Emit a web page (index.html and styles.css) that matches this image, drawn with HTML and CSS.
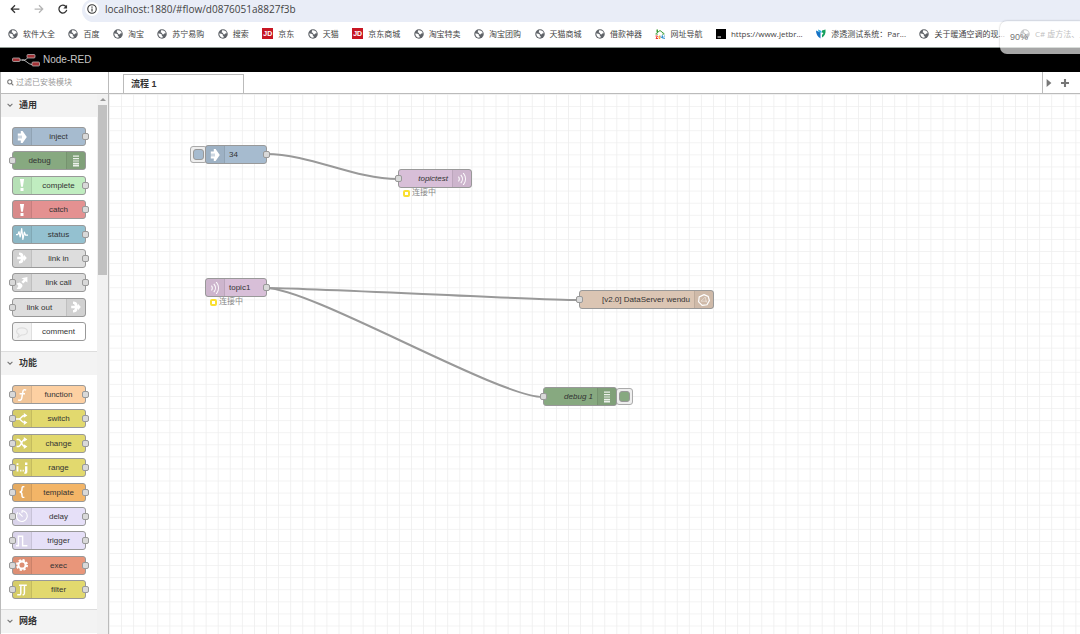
FILE: index.html
```
<!DOCTYPE html>
<html lang="zh-CN">
<head>
<meta charset="utf-8">
<title>Node-RED</title>
<link rel="stylesheet" href="styles.css">
</head>
<body>
<svg class="sprite" aria-hidden="true">
  <symbol id="i-globe" viewBox="0 0 20 20"><circle cx="10" cy="10" r="9.500" fill="#5f6368"/><path d="M2.500 9c2-.5 4 0 6 1s0 3 2 4 1 2 0 3.500c-5 0-8-4-8-8.500zM8 3c2-1 4-.5 6 .5s3 3 3.500 5l-3 .5-1.500 2-3-1 .5-2-3-1z" fill="#fff"/></symbol>
  <symbol id="i-inject" viewBox="0 0 20 20"><path fill="#fff" d="M3 4h5V0h3l7 10-7 10H8v-4H3v-4h7v-1H3V9h7V8H3z"/></symbol>
  <symbol id="i-debug" viewBox="0 0 20 20"><path fill="#fff" fill-opacity=".85" d="M5 1h10v2H5zM5 5h10v2H5zM5 9h10v2H5zM5 13h10v2H5zM5 16h10v3H5z"/></symbol>
  <symbol id="i-alert" viewBox="0 0 20 20"><path fill="#fff" d="M6.500 0h7l-2 13h-3zM7.500 15h5v5h-5z"/></symbol>
  <symbol id="i-status" viewBox="0 0 20 20"><path fill="none" stroke="#fff" stroke-width="2" stroke-linejoin="round" d="M0 11h3l2-5 2 9 2.500-14 2 18 2.500-12 2 5h4"/></symbol>
  <symbol id="i-link" viewBox="0 0 20 20"><path fill="#fff" d="M5 1c5 0 7 2 7 5V7h1V4l5 6-5 6v-3h-1v1c0 3-2 5-7 5v-4c2 0 3-1 3-3H2V8h6c0-2-1-3-3-3z"/></symbol>
  <symbol id="i-call" viewBox="0 0 20 20"><path fill="#fff" d="M9 2l10-2v9l-3-2-4 4-3-3 4-4zM1 11l5-2 4 3c2 3 0 5-3 8H1l3-5z"/></symbol>
  <symbol id="i-comment" viewBox="0 0 20 20"><path fill="none" stroke="#ddd" stroke-width="2" d="M10 3c5 0 9 2.500 9 6s-4 6-9 6H9l-6 4 2-5c-2-1-4-3-4-5 0-3.500 4-6 9-6z"/></symbol>
  <symbol id="i-function" viewBox="0 0 20 20"><path fill="none" stroke="#fff" stroke-width="2.500" d="M17 2c-3-1.500-5-.5-5.500 2.500l-2 11c-.5 3-3 4-6 2.500M6 8h9"/></symbol>
  <symbol id="i-switch" viewBox="0 0 20 20"><path fill="none" stroke="#fff" stroke-width="2.500" d="M0 10h5c4 0 3-6 10-6M5 10c4 0 3 6 10 6"/><path fill="#fff" d="M13 0l6 4-6 4zM13 12l6 4-6 4z"/></symbol>
  <symbol id="i-change" viewBox="0 0 20 20"><path fill="none" stroke="#fff" stroke-width="2.500" d="M1 4h3c5 0 5 12 11 12M1 16h3c5 0 5-12 11-12"/><path fill="#fff" d="M13 0l6 4-6 4zM13 12l6 4-6 4z"/></symbol>
  <symbol id="i-range" viewBox="0 0 20 20"><path fill="#fff" d="M1 2h3v3H1zM1 7h3v9H1zM7 13h2v3H7zM11 13h2v3h-2zM15 1h4v4h-4zM15 7h4v9c0 3-2 4-5 4v-3l1-1z"/></symbol>
  <symbol id="i-template" viewBox="0 0 20 20"><path fill="none" stroke="#fff" stroke-width="2.500" d="M14 1c-4 0-4 1-4 4s0 5-4 5c4 0 4 2 4 5s0 4 4 4"/></symbol>
  <symbol id="i-delay" viewBox="0 0 20 20"><path fill="none" stroke="#fff" stroke-width="1.800" d="M10 1a9 9 0 1 1-7 3M10 1v4M5 5l6 6"/></symbol>
  <symbol id="i-trigger" viewBox="0 0 20 20"><path fill="none" stroke="#fff" stroke-width="2.400" d="M0 18h4V2h7v16h8"/></symbol>
  <symbol id="i-exec" viewBox="0 0 20 20"><circle cx="10" cy="10" r="6" fill="none" stroke="#fff" stroke-width="3.500"/><circle cx="10" cy="10" r="8.500" fill="none" stroke="#fff" stroke-width="3" stroke-dasharray="3.700 2.970"/></symbol>
  <symbol id="i-filter" viewBox="0 0 20 20"><path fill="none" stroke="#fff" stroke-width="2.500" d="M2 18h4c2 0 2-1 2-4V6c0-3 0-4 3-4h7M11 18c3 0 3-1 3-4V6c0-3 0-4 2-4M5 2h6"/></symbol>
  <symbol id="i-waves" viewBox="0 0 20 20"><path fill="none" stroke="#fff" stroke-width="1.800" d="M4 6c2 2 2 6 0 8M8 3c3.500 4 3.500 10 0 14M12 0c5 6 5 14 0 20"/></symbol>
  <symbol id="i-data" viewBox="0 0 20 20"><path fill="none" stroke="#fff" stroke-width="2" d="M10 1l7 3 2 7-4 7-8 1-6-6 1-8z"/><path fill="none" stroke="#fff" stroke-opacity=".6" stroke-width="1.200" d="M5 12l7-7 2 9M5 12h10"/></symbol>
  <symbol id="i-chevron" viewBox="0 0 10 10"><path fill="none" stroke="#777" stroke-width="1.800" d="M1 3l4 4 4-4"/></symbol>
</svg>

<header class="browser">
  <button class="tool" aria-label="后退"><svg viewBox="0 0 16 16"><path d="M15 8H2M8 2L2 8l6 6" fill="none" stroke="#333" stroke-width="2"/></svg></button>
  <button class="tool" aria-label="前进"><svg viewBox="0 0 16 16"><path d="M1 8h13M8 2l6 6-6 6" fill="none" stroke="#b5b5b5" stroke-width="2"/></svg></button>
  <button class="tool" aria-label="刷新"><svg viewBox="0 0 16 16"><path d="M13 4.500A6.300 6.300 0 1 0 14 9.500" fill="none" stroke="#333" stroke-width="2"/><path d="M14.500 1v6h-6z" fill="#333"/></svg></button>
  <div class="address">
    <span class="info"><svg viewBox="0 0 16 16"><circle cx="8" cy="8" r="6.800" fill="none" stroke="#333" stroke-width="1.700"/><path d="M8 7v5M8 4v1.800" stroke="#333" stroke-width="1.800"/></svg></span>
    <input class="url" aria-label="网址" value="localhost:1880/#flow/d0876051a8827f3b">
  </div>
</header>

<nav class="bookmarks">
  <div class="marks">
    <a class="mark" href="#"><svg><use href="#i-globe"/></svg>软件大全</a>
    <a class="mark" href="#"><svg><use href="#i-globe"/></svg>百度</a>
    <a class="mark" href="#"><svg><use href="#i-globe"/></svg>淘宝</a>
    <a class="mark" href="#"><svg><use href="#i-globe"/></svg>苏宁易购</a>
    <a class="mark" href="#"><svg><use href="#i-globe"/></svg>搜索</a>
    <a class="mark" href="#"><span class="jd">JD</span>京东</a>
    <a class="mark" href="#"><svg><use href="#i-globe"/></svg>天猫</a>
    <a class="mark" href="#"><span class="jd">JD</span>京东商城</a>
    <a class="mark" href="#"><svg><use href="#i-globe"/></svg>淘宝特卖</a>
    <a class="mark" href="#"><svg><use href="#i-globe"/></svg>淘宝团购</a>
    <a class="mark" href="#"><svg><use href="#i-globe"/></svg>天猫商城</a>
    <a class="mark" href="#"><svg><use href="#i-globe"/></svg>借款神器</a>
    <a class="mark" href="#"><svg viewBox="0 0 20 20"><path d="M1 10l9-7 9 7M4 9v3M16 9v3" fill="none" stroke="#3a9b35" stroke-width="2"/><path d="M3 1h3v5H3z" fill="#3a9b35"/><path d="M1 14h4l-3 5h4" fill="none" stroke="#e33" stroke-width="2"/><path d="M8 14h2v5H8z" fill="none" stroke="#f80" stroke-width="1.500"/><path d="M12 13v4h3v-4 6M19 13l-2 6h3" fill="none" stroke="#28c" stroke-width="1.500"/></svg>网址导航</a>
    <a class="mark" href="#"><svg viewBox="0 0 20 20"><path d="M0 0h20v20H0z"/><path d="M3 15h7v2H3z" fill="#fff"/></svg>https://www.jetbr...</a>
    <a class="mark" href="#"><svg viewBox="0 0 20 20"><path d="M0 3l9 4v12c-6-3-9-9-9-16z" fill="#1673c5"/><path d="M4 1l7 3v4L5 5z" fill="#29abe2"/><path d="M12 3l7-2c1 8-2 13-7 16v-5l3-4-3-1z" fill="#14a05c"/></svg>渗透测试系统：Par...</a>
    <a class="mark" href="#"><svg><use href="#i-globe"/></svg>关于暖通空调的现...</a>
  </div>
  <a class="mark tail" href="#"><svg><use href="#i-globe"/></svg>C# 虚方法、上</a>
  <div class="zoom">90%</div>
</nav>

<header class="brand">
  <svg class="logo" viewBox="0 0 56 26"><path d="M16 12h6c10 0 8-8 18-8M20 12c10 0 10 9 22 9" fill="none" stroke="#bbb" stroke-width="2"/><g fill="#a33236" stroke="#bbb" stroke-width="1.500"><rect x="1" y="8" width="15" height="7" rx="2"/><rect x="30" y="1" width="16" height="7" rx="2"/><rect x="40" y="16" width="15" height="8" rx="2"/></g></svg>
  <span>Node-RED</span>
</header>

<main class="editor">
  <aside class="palette">
    <label class="search"><svg viewBox="0 0 10 10"><circle cx="4" cy="4" r="3" fill="none" stroke="#777" stroke-width="1.500"/><path d="M6 6l3 3" stroke="#777" stroke-width="1.600"/></svg><input placeholder="过滤已安装模块" aria-label="过滤已安装模块"></label>
    <div class="scroller">
      <div class="categories">
        <section>
          <button class="category"><svg><use href="#i-chevron"/></svg>通用</button>
          <div class="nodes">
            <div class="node out blue"><span class="icon"><svg><use href="#i-inject"/></svg></span><span class="label">inject</span></div>
            <div class="node in green flip"><span class="icon"><svg><use href="#i-debug"/></svg></span><span class="label">debug</span></div>
            <div class="node out mint"><span class="icon"><svg><use href="#i-alert"/></svg></span><span class="label">complete</span></div>
            <div class="node out red"><span class="icon"><svg><use href="#i-alert"/></svg></span><span class="label">catch</span></div>
            <div class="node out teal"><span class="icon"><svg><use href="#i-status"/></svg></span><span class="label">status</span></div>
            <div class="node out grey"><span class="icon"><svg><use href="#i-link"/></svg></span><span class="label">link in</span></div>
            <div class="node in out grey"><span class="icon"><svg><use href="#i-call"/></svg></span><span class="label">link call</span></div>
            <div class="node in grey flip"><span class="icon"><svg><use href="#i-link"/></svg></span><span class="label">link out</span></div>
            <div class="node white"><span class="icon"><svg><use href="#i-comment"/></svg></span><span class="label">comment</span></div>
          </div>
        </section>
        <section>
          <button class="category"><svg><use href="#i-chevron"/></svg>功能</button>
          <div class="nodes">
            <div class="node in out peach"><span class="icon"><svg><use href="#i-function"/></svg></span><span class="label">function</span></div>
            <div class="node in out yellow"><span class="icon"><svg><use href="#i-switch"/></svg></span><span class="label">switch</span></div>
            <div class="node in out yellow"><span class="icon"><svg><use href="#i-change"/></svg></span><span class="label">change</span></div>
            <div class="node in out yellow"><span class="icon"><svg><use href="#i-range"/></svg></span><span class="label">range</span></div>
            <div class="node in out orange"><span class="icon"><svg><use href="#i-template"/></svg></span><span class="label">template</span></div>
            <div class="node in out lilac"><span class="icon"><svg><use href="#i-delay"/></svg></span><span class="label">delay</span></div>
            <div class="node in out lilac"><span class="icon"><svg><use href="#i-trigger"/></svg></span><span class="label">trigger</span></div>
            <div class="node in out salmon"><span class="icon"><svg><use href="#i-exec"/></svg></span><span class="label">exec</span></div>
            <div class="node in out yellow"><span class="icon"><svg><use href="#i-filter"/></svg></span><span class="label">filter</span></div>
          </div>
        </section>
        <section>
          <button class="category"><svg><use href="#i-chevron"/></svg>网络</button>
        </section>
      </div>
      <div class="scrollbar"><span class="arrow"></span><span class="thumb"></span></div>
    </div>
  </aside>

  <div class="workspace">
    <div class="tabs">
      <button class="tab">流程 1</button>
      <div class="tab-tools">
        <button aria-label="向右滚动"><svg viewBox="0 0 10 10"><path d="M2 0l6 5-6 5z" fill="#777"/></svg></button>
        <button aria-label="添加流程"><svg viewBox="0 0 10 10"><path d="M5 0v10M0 5h10" stroke="#777" stroke-width="2.600"/></svg></button>
      </div>
    </div>
    <div class="canvas">
      <svg class="wires" aria-hidden="true">
        <defs><pattern id="grid" width="20" height="20" patternUnits="userSpaceOnUse" patternTransform="scale(.604)"><path d="M0 .5h20M.5 0v20" stroke="#eee" stroke-width="1.600"/></pattern></defs>
        <rect width="100%" height="100%" fill="url(#grid)"/>
        <g fill="none" stroke="#999" stroke-width="2">
          <path d="M157 60C202 60 244 85 289 85"/>
          <path d="M157 194C202 194 425 206 470 206"/>
          <path d="M157 194C202 194 389 303 434 303"/>
        </g>
      </svg>
      <button class="trigger t-inject" aria-label="注入"><span></span></button>
      <div class="node out blue placed n-inject"><span class="icon"><svg><use href="#i-inject"/></svg></span><span class="label">34</span></div>
      <div class="node in pink flip placed n-test"><span class="icon"><svg><use href="#i-waves"/></svg></span><span class="label"><em>topictest</em></span></div>
      <div class="state s-test">连接中</div>
      <div class="node out pink placed n-topic"><span class="icon"><svg><use href="#i-waves"/></svg></span><span class="label">topic1</span></div>
      <div class="state s-topic">连接中</div>
      <div class="node in tan flip placed n-data"><span class="icon"><svg><use href="#i-data"/></svg></span><span class="label">[v2.0] DataServer wendu</span></div>
      <button class="trigger t-debug" aria-label="调试开关"><span></span></button>
      <div class="node in green flip placed n-debug"><span class="icon"><svg><use href="#i-debug"/></svg></span><span class="label"><em>debug 1</em></span></div>
    </div>
  </div>
</main>
</body>
</html>
```
FILE: styles.css
```
*, *::before, *::after { box-sizing: border-box; }
body {
  margin: 0;
  height: 100vh;
  display: flex;
  flex-direction: column;
  overflow: hidden;
  background: #fff;
  color: #333;
  font: 8px/12px "Liberation Sans", "Noto Sans CJK SC", sans-serif;
}
button, input { font: inherit; color: inherit; border: 0; padding: 0; background: none; outline: 0; }
a { color: inherit; text-decoration: none; }
.sprite { position: absolute; width: 0; height: 0; }

/* Browser chrome */
.browser { display: flex; align-items: center; height: 20px; flex: none; padding: 0 0 3px 10px; gap: 14px; }
.tool { display: flex; width: 10px; height: 10px; }
.tool svg { width: 10px; height: 10px; }
.address { flex: 1; display: flex; align-items: center; gap: 6px; height: 23px; margin-bottom: -3px; padding: 0 0 3px 3px; background: #e9edf7; border-radius: 12px 0 0 12px; }
.info { display: flex; align-items: center; justify-content: center; width: 14px; height: 14px; background: #fff; border-radius: 50%; }
.info svg { width: 10px; height: 10px; }
.url { flex: 1; font: 10px/14px "Open Sans", sans-serif; color: #444; }
.bookmarks { position: relative; display: flex; align-items: center; gap: 15px; flex: none; height: 28px; padding-left: 8px; border-bottom: 1px solid #8f9a93; font-family: "Open Sans", "Noto Sans CJK SC", sans-serif; white-space: nowrap; }
.marks { flex: 1; display: flex; justify-content: space-between; }
.mark { display: flex; align-items: center; gap: 5px; color: #444; }
.mark svg { width: 10px; height: 10px; flex: none; }
.jd { width: 11px; height: 11px; background: #c81623; color: #fff; font: bold 7px/11px "Liberation Sans", sans-serif; text-align: center; }
.tail { flex: none; width: 60px; overflow: hidden; }
.zoom { position: absolute; right: -6px; top: 1px; width: 86px; height: 33px; padding: 9px 10px; z-index: 1; border-radius: 7px; background: rgba(255, 255, 255, .65); box-shadow: 0 0 2px rgba(0, 0, 0, .3); color: #777; font: 9px/14px "Liberation Sans", sans-serif; }

/* Editor header */
.brand { display: flex; align-items: center; gap: 3px; flex: none; height: 24px; padding-left: 12px; background: #000; color: #c7c7c7; font-size: 10px; }
.logo { width: 28px; height: 13px; }

.editor { flex: 1; display: flex; min-height: 0; }

/* Palette */
.palette { width: 109px; flex: none; display: flex; flex-direction: column; border: solid #bbb; border-width: 0 1px; }
.search { display: flex; align-items: center; gap: 2px; flex: none; height: 22px; padding-left: 6px; border-bottom: 1px solid #bbb; }
.search svg { width: 7px; height: 7px; }
.search input { width: 80px; }
.search input::placeholder { color: #999; }
.scroller { flex: 1; display: flex; min-height: 0; }
.categories { flex: 1; overflow: hidden; }
.category { display: flex; align-items: center; gap: 6px; width: 100%; height: 23px; padding: 0 0 2px 6px; background: #f3f3f3; font-size: 9px; font-weight: bold; }
.category svg { width: 6px; height: 6px; }
section + section .category { border-top: 1px solid #ddd; height: 24px; }
.nodes { display: flex; flex-direction: column; justify-content: space-between; min-height: 234px; padding: 10px 11px; }
.scrollbar { width: 11px; flex: none; display: flex; flex-direction: column; align-items: center; background: #f1f1f1; }
.arrow { margin: 4px 0; border: solid transparent; border-width: 0 3px 3px; border-bottom-color: #999; }
.thumb { width: 9px; height: 170px; background: #c1c1c1; }

/* Nodes, shared by the palette and the canvas */
.node { position: relative; display: flex; height: 19px; border: 1px solid #999; border-radius: 3px; white-space: nowrap; }
.flip { flex-direction: row-reverse; }
.icon { flex: none; display: flex; align-items: center; justify-content: center; width: 19px; background: rgba(0, 0, 0, .05); border-right: 1px solid rgba(0, 0, 0, .08); }
.flip .icon { border-right: 0; border-left: 1px solid rgba(0, 0, 0, .08); }
.icon svg { width: 12px; height: 12px; }
.label { flex: 1; line-height: 17px; text-align: center; }
.in::before, .out::after { content: ""; position: absolute; top: 5px; width: 7px; height: 7px; background: #d9d9d9; border: 1px solid #999; border-radius: 2px; }
.in::before { left: -4px; }
.out::after { right: -4px; }
.blue { background: #a6bbcf; }
.green { background: #87a980; }
.mint { background: #c0edc0; }
.red { background: #e49191; }
.teal { background: #94c1d0; }
.grey { background: #ddd; }
.white { background: #fff; }
.peach { background: #fdd0a2; }
.yellow { background: #e2d96e; }
.orange { background: #f3b567; }
.lilac { background: #e6e0f8; }
.salmon { background: #e9967a; }
.pink { background: #d8bfd8; }
.tan { background: #dbc5b3; }

/* Workspace */
.workspace { flex: 1; display: flex; flex-direction: column; min-width: 0; }
.tabs { display: flex; align-items: flex-end; justify-content: space-between; flex: none; height: 22px; padding-left: 14px; border-bottom: 1px solid #bbb; }
.tab { width: 121px; height: 19px; padding-left: 7px; border: 1px solid #bbb; border-bottom: 0; text-align: left; font-size: 9px; font-weight: bold; }
.tab-tools { display: flex; align-items: center; align-self: stretch; gap: 8px; width: 38px; padding-left: 2px; border-left: 1px solid #bbb; }
.tab-tools button { display: flex; }
.tab-tools svg { width: 8px; height: 8px; }
.canvas { position: relative; flex: 1; overflow: hidden; }
.wires { position: absolute; width: 100%; height: 100%; }
.placed { position: absolute; }
.n-inject { left: 96px; top: 51px; width: 62px; }
.n-test { left: 289px; top: 75px; width: 74px; }
.n-topic { left: 96px; top: 184px; width: 62px; }
.n-data { left: 470px; top: 196px; width: 135px; }
.n-debug { left: 434px; top: 293px; width: 74px; }
.placed .label { text-align: left; padding-left: 4px; }
.placed.flip .label { text-align: right; padding-right: 4px; }
.trigger { position: absolute; display: flex; width: 17px; height: 17px; padding: 2px; border: 1px solid #aaa; border-radius: 3px; background: #eee; }
.trigger span { flex: 1; border: 1px solid #999; border-radius: 3px; }
.t-inject { left: 81px; top: 52px; }
.t-inject span { background: #a6bbcf; }
.t-debug { left: 507px; top: 294px; }
.t-debug span { background: #87a980; }
.state { position: absolute; display: flex; align-items: center; gap: 2px; color: #888; line-height: 10px; }
.state::before { content: ""; width: 7px; height: 7px; border: 2px solid #f9df31; border-radius: 2px; }
.s-test { left: 294px; top: 94px; }
.s-topic { left: 101px; top: 203px; }
```
